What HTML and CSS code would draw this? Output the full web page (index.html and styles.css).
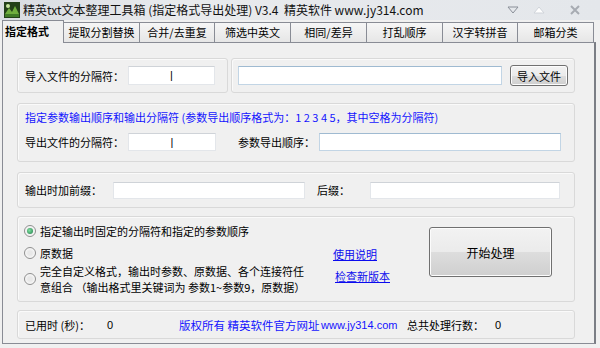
FILE: index.html
```html
<!DOCTYPE html>
<html lang="zh-CN">
<head>
    <meta charset="UTF-8">
    <title>精英txt文本整理工具箱</title>
    <link rel="stylesheet" href="styles.css">
</head>
<body>
    <div class="titlebar">
        <svg class="app-icon" width="16" height="16" viewBox="0 0 16 16">
            <rect x="0" y="0" width="16" height="16" fill="#23401a"/>
            <path d="M1 12 L5 6 L8 10 L11 4 L15 12 Z" fill="#6fae3e"/>
            <circle cx="4" cy="4" r="2" fill="#c8e6a0"/>
            <rect x="1" y="12" width="14" height="3" fill="#3f7a26"/>
        </svg>
        <span class="title">精英txt文本整理工具箱 (指定格式导出处理) V3.4&nbsp;&nbsp;精英软件 www.jy314.com</span>
        <div class="controls">
            <svg width="12" height="8" viewBox="0 0 12 8"><path d="M1 1 L11 1 L6 7 Z" fill="none" stroke="#8a8f98" stroke-width="1"/></svg>
            <svg width="12" height="8" viewBox="0 0 12 8"><path d="M1 7 L11 7 L6 1 Z" fill="#ffffff" stroke="#d0d4da" stroke-width="1"/></svg>
            <svg width="10" height="10" viewBox="0 0 10 10"><path d="M1 1 L9 9 M9 1 L1 9" stroke="#a7abb2" stroke-width="2"/></svg>
        </div>
    </div>

    <div class="tabs">
        <div class="tab active">指定格式</div>
        <div class="tab">提取分割替换</div>
        <div class="tab">合并/去重复</div>
        <div class="tab">筛选中英文</div>
        <div class="tab">相同/差异</div>
        <div class="tab">打乱顺序</div>
        <div class="tab">汉字转拼音</div>
        <div class="tab">邮箱分类</div>
    </div>

    <div class="panel">
        <div class="group-row">
            <div class="group g-sep">
                <span class="lbl w-sep">导入文件的分隔符：</span>
                <div class="field f-sep">|</div>
            </div>
            <div class="group g-file">
                <div class="field f-file blue-edge"></div>
                <button class="btn btn-import">导入文件</button>
            </div>
        </div>

        <div class="group g-order">
            <div class="heading">指定参数输出顺序和输出分隔符 (参数导出顺序格式为：1 2 3 4 5，其中空格为分隔符)</div>
            <div class="line">
                <span class="lbl w-sep">导出文件的分隔符：</span>
                <div class="field f-out">|</div>
                <span class="lbl w-param">参数导出顺序：</span>
                <div class="field f-param blue-edge"></div>
            </div>
        </div>

        <div class="group g-fix">
            <span class="lbl w-prefix">输出时加前缀：</span>
            <div class="field f-prefix"></div>
            <span class="lbl w-suffix">后缀：</span>
            <div class="field f-suffix"></div>
        </div>

        <div class="group g-mode">
            <div class="options">
                <div class="option">
                    <span class="radio checked"></span>
                    <span>指定输出时固定的分隔符和指定的参数顺序</span>
                </div>
                <div class="option">
                    <span class="radio"></span>
                    <span>原数据</span>
                </div>
                <div class="option option-wide">
                    <span class="radio"></span>
                    <span class="wrap">完全自定义格式，输出时参数、原数据、各个连接符任<br>意组合 （输出格式里关键词为 参数1~参数9，原数据）</span>
                </div>
            </div>
            <div class="links">
                <a href="#" class="link">使用说明</a>
                <a href="#" class="link link-2">检查新版本</a>
            </div>
            <button class="btn btn-start">开始处理</button>
        </div>

        <div class="group g-status">
            <span class="w-time">已用时 (秒)：</span>
            <span class="w-zero">0</span>
            <span class="copy">版权所有 精英软件官方网址</span>
            <span class="site">www.jy314.com</span>
            <span class="w-total">总共处理行数：</span>
            <span>0</span>
        </div>
    </div>
</body>
</html>
```

FILE: styles.css
```css
body {
    margin: 0;
    width: 600px;
    height: 348px;
    overflow: hidden;
    background-color: #f0f0f0;
    font-family: "Noto Sans CJK SC", "Microsoft YaHei", sans-serif;
    font-size: 11px;
    color: #000;
}

.titlebar {
    height: 20px;
    display: flex;
    align-items: center;
    background: linear-gradient(to right, #d9dde2, #e8eaed 30%, #e4e7eb);
}

.app-icon {
    margin-left: 4px;
    flex: none;
}

.title {
    margin-left: 3px;
    font-size: 12px;
    line-height: 20px;
    color: #111;
}

.controls {
    margin-left: auto;
    margin-right: 20px;
    display: flex;
    align-items: center;
    gap: 14px;
}

.controls svg:nth-child(3) {
    margin-left: 11px;
}

.tabs {
    height: 22px;
    display: flex;
    align-items: flex-end;
    padding-left: 2px;
    position: relative;
    z-index: 1;
}

.tab {
    box-sizing: border-box;
    width: 77px;
    height: 20px;
    margin-left: -1px;
    border: 1px solid #898c95;
    border-bottom: none;
    background: linear-gradient(#f6f6f6, #e6e6e6);
    text-align: center;
    line-height: 19px;
    white-space: nowrap;
}

.tab:nth-child(3),
.tab:nth-child(7) {
    width: 76px;
}

.tab.active {
    width: 62px;
    height: 23px;
    margin-left: 0;
    margin-bottom: -1px;
    background: #f0f0f0;
    font-weight: bold;
    line-height: 21px;
    text-align: left;
    padding-left: 2px;
}

.panel {
    box-sizing: border-box;
    margin-left: 2px;
    width: 594px;
    height: 302px;
    border: 1px solid #898c95;
    border-right: 2px solid #7b7e85;
    padding: 15px 0 0 14px;
}

.group {
    box-sizing: border-box;
    width: 558px;
    border: 1px solid #d9d9d9;
    border-radius: 3px;
    box-shadow: inset 1px 1px 0 #fafafa;
    display: flex;
    align-items: center;
    padding-left: 7px;
}

.group-row {
    display: flex;
    gap: 3px;
}

.g-sep {
    width: 211px;
    height: 35px;
}

.g-file {
    width: 344px;
    height: 35px;
    padding-left: 6px;
}

.lbl {
    white-space: nowrap;
}

.w-sep {
    width: 103px;
}

.w-param {
    width: 81px;
    margin-left: 22px;
}

.w-prefix {
    width: 88px;
}

.w-suffix {
    width: 53px;
    margin-left: 12px;
}

.field {
    box-sizing: border-box;
    height: 19px;
    background: #fff;
    border: 1px solid #e3e6ea;
    border-top-color: #cfd3d8;
    text-align: center;
    line-height: 16px;
    font-family: "Liberation Sans", sans-serif;
    font-size: 11px;
}

.blue-edge {
    border-color: #c2d5e5;
    border-top-color: #9fbad1;
}

.f-sep {
    width: 87px;
}

.f-file {
    width: 264px;
}

.f-out {
    width: 88px;
    height: 18px;
}

.f-param {
    width: 242px;
    height: 18px;
}

.f-prefix {
    width: 192px;
    height: 17px;
}

.f-suffix {
    width: 190px;
    height: 17px;
}

.btn {
    box-sizing: border-box;
    font-family: inherit;
    font-size: 11px;
    color: #000;
    border: 1px solid #707070;
    border-radius: 3px;
    background: linear-gradient(#f2f2f2 0%, #ebebeb 50%, #dddddd 51%, #cfcfcf 100%);
    box-shadow: inset 0 0 0 1px #fcfcfc;
    padding: 0;
    cursor: pointer;
}

.btn-import {
    width: 58px;
    height: 21px;
    margin-left: 8px;
}

.g-order {
    height: 59px;
    margin-top: 10px;
    flex-direction: column;
    align-items: flex-start;
    padding-top: 5px;
}

.heading {
    color: #1414ff;
    line-height: 16px;
    white-space: nowrap;
}

.line {
    display: flex;
    align-items: center;
    margin-top: 8px;
}

.g-fix {
    height: 36px;
    margin-top: 10px;
}

.g-mode {
    height: 86px;
    margin-top: 8px;
    align-items: flex-start;
    padding-left: 6px;
}

.options {
    width: 309px;
    padding-top: 6px;
}

.option {
    display: flex;
    align-items: center;
    height: 16px;
    margin-bottom: 6px;
    white-space: nowrap;
}

.option-wide {
    height: 32px;
    margin-top: -4px;
    line-height: 16px;
}

.radio {
    box-sizing: border-box;
    width: 12px;
    height: 12px;
    margin-right: 4px;
    border-radius: 50%;
    border: 1px solid #8f8f8f;
    background: radial-gradient(circle, #e8e8e8 30%, #f8f8f8 70%);
    flex: none;
    position: relative;
}

.radio.checked::after {
    content: "";
    position: absolute;
    left: 2px;
    top: 2px;
    width: 6px;
    height: 6px;
    border-radius: 50%;
    background: radial-gradient(circle at 40% 40%, #7fe0a0, #1f7a48);
}

.links {
    width: 96px;
    display: flex;
    flex-direction: column;
    align-items: flex-start;
    padding-top: 29px;
}

.link {
    color: #0b0bee;
    line-height: 16px;
    text-decoration: underline;
}

.link-2 {
    margin-top: 6px;
    margin-left: 2px;
}

.btn-start {
    width: 123px;
    height: 50px;
    margin-top: 10px;
    font-size: 12px;
}

.g-status {
    height: 29px;
    margin-top: 8px;
}

.w-time {
    width: 82px;
    white-space: nowrap;
}

.w-zero {
    width: 72px;
    font-family: "Liberation Sans", sans-serif;
}

.copy {
    width: 142px;
    color: #1414ff;
    font-size: 11.5px;
    white-space: nowrap;
}

.site {
    width: 86px;
    color: #1414ff;
    font-family: "Liberation Sans", sans-serif;
    font-size: 11px;
}

.w-total {
    width: 88px;
    white-space: nowrap;
}

.g-status span:last-child {
    font-family: "Liberation Sans", sans-serif;
}
```
